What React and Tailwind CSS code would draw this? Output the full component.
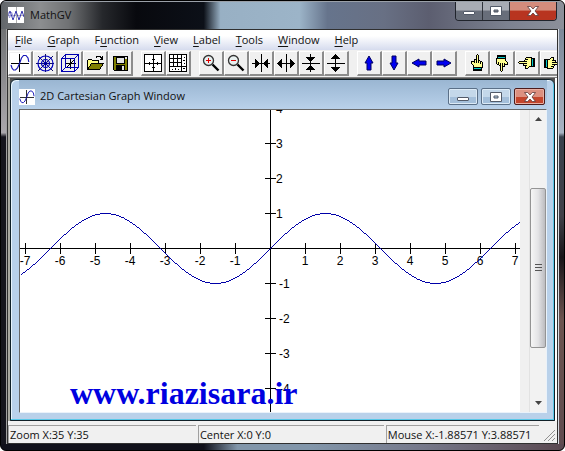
import { useId } from 'react';

const UNIT = 35;
const ORIGIN = { x: 250, y: 138 };

const wave = Array.from({ length: 501 }, (_, x) => {
  const y = ORIGIN.y - UNIT * Math.sin((x - ORIGIN.x) / UNIT);
  return `${x + 0.5},${Math.round(y) + 0.5}`;
}).join(' ');

const xTicks = [-7, -6, -5, -4, -3, -2, -1, 1, 2, 3, 4, 5, 6, 7];
const yTicks = [4, 3, 2, 1, -1, -2, -3, -4];

const Icon = ({ children, turn = 0 }) => (
  <svg viewBox="0 0 20 20" className="h-5 w-5" fill="none" stroke="#000" shapeRendering="crispEdges" aria-hidden="true">
    <g transform={`rotate(${turn} 10 10)`}>{children}</g>
  </svg>
);

const SineIcon = () => (
  <Icon>
    <rect width="20" height="20" fill="#fff" stroke="none" />
    <path d="M1 10.500h18M9.500 1v18" />
    <path
      d="M1 12l1 3 1.500 2h2L7.500 15l2-4.500L11.500 5l2-2.500h2.500L18 5l.8 4"
      stroke="#1818b8"
      strokeWidth="1.2"
      shapeRendering="auto"
    />
  </Icon>
);

const PolarIcon = () => (
  <Icon>
    <path d="M1 10.500h18M10.500 1v18M3 3l15 15M3 18L18 3" stroke="#101060" />
    <g stroke="#0000c0" strokeWidth="1.2" shapeRendering="auto">
      <circle cx="10.5" cy="10.5" r="7.5" />
      <circle cx="10.5" cy="10.5" r="4" />
      <circle cx="10.5" cy="10.5" r="1.5" fill="#000060" />
    </g>
  </Icon>
);

const CubeIcon = () => (
  <Icon>
    <path d="M5 10.500h11M10.500 5v11M6 15l9-9" />
    <path d="M1.500 5.500h13v13h-13zM5.500 1.500h13v13h-13zM1.500 5.500l4-4M14.500 5.500l4-4M14.500 18.500l4-4M1.500 18.500l4-4" stroke="#0000b0" />
  </Icon>
);

const OpenIcon = () => (
  <Icon>
    <path d="M2.500 16.500v-9l1-1h3l1 1h6v3" fill="#ffff80" />
    <path d="M2.500 16.500l4-6h12l-4 6z" fill="#808000" />
    <path d="M11 4.500l1-1h3l2 2M17.500 3v3M15 6.500h3" />
  </Icon>
);

const SaveIcon = () => (
  <Icon>
    <path d="M3.500 3.500h14v14h-13l-1-1z" fill="#808000" />
    <path d="M6.500 4h8v6h-8z" fill="#e4e4e4" />
    <path d="M6 12h9v5h-9z" fill="#000" stroke="none" />
    <path d="M12 13h2v4h-2zM15 4h2v2h-2z" fill="#e4e4e4" stroke="none" />
  </Icon>
);

const AxesIcon = () => (
  <Icon>
    <path d="M1.500 1.500h17v17h-17z" fill="#fff" />
    <path d="M2 10.500h17M10.500 2v17M6.500 9v3M14.500 9v3M9 6.500h3M9 14.500h3" />
  </Icon>
);

const GridIcon = () => (
  <Icon>
    <path d="M1.500 1.500h17v17h-17z" fill="#fff" />
    <path d="M2 5.500h12M2 9.500h12M2 13.500h17M5.500 2v12M9.500 2v12M13.500 2v17" />
    <path d="M16 4.500h1M15 7.500h2M16 10.500h1M4.500 16v1M7.500 15v2M10.500 16v1M15 15.500h2" />
  </Icon>
);

const ZoomIcon = ({ plus }) => (
  <Icon>
    <g shapeRendering="auto">
      <circle cx="7.5" cy="7.5" r="5" fill="#e8f0f0" stroke="#333" strokeWidth="1.3" />
      <path d="M11.500 11.500l6 6" strokeWidth="2.4" />
    </g>
    <path d={plus ? 'M5 7.500h5M7.500 5v5' : 'M5 7.500h5'} stroke="#e00000" />
  </Icon>
);

const ShrinkIcon = ({ turn }) => (
  <Icon turn={turn}>
    <path d="M10.500 1v18M1 10.500h18" />
    <path d="M4 6l5 4.500L4 15zM17 6l-5 4.500 5 4.500z" fill="#000" stroke="none" />
  </Icon>
);

const StretchIcon = ({ turn }) => (
  <Icon turn={turn}>
    <path d="M10.500 1v18M1 10.500h18" />
    <path d="M6 6l-5 4.500L6 15zM14 6l5 4.500-5 4.500z" fill="#000" stroke="none" />
  </Icon>
);

const ArrowIcon = ({ turn }) => (
  <Icon turn={turn}>
    <path d="M10 3l4 7h-2v7H8v-7H6z" fill="#0000f0" stroke="#000060" shapeRendering="auto" />
  </Icon>
);

const HandIcon = ({ turn }) => (
  <Icon turn={turn}>
    <path d="M6.500 14.500v-2l-2-2v-2h2l1 1v-3h2v-4l1-1 1 1v5h1l3 2v5l-1 1z" fill="#ffff90" />
    <path d="M9.500 7v3M11.500 7v3M13.500 8v3" />
    <path d="M6.500 14.500h8v3h-8z" fill="#000" />
    <path d="M7 15.500h7" stroke="#00c8c8" />
  </Icon>
);

const groups = [
  [
    ['2D Cartesian graph', <SineIcon />],
    ['2D polar graph', <PolarIcon />],
    ['3D graph', <CubeIcon />],
    ['Open', <OpenIcon />],
    ['Save', <SaveIcon />],
  ],
  [
    ['Axes', <AxesIcon />],
    ['Grid', <GridIcon />],
  ],
  [
    ['Zoom in', <ZoomIcon plus />],
    ['Zoom out', <ZoomIcon />],
    ['Shrink X', <ShrinkIcon />],
    ['Stretch X', <StretchIcon />],
    ['Shrink Y', <ShrinkIcon turn={90} />],
    ['Stretch Y', <StretchIcon turn={90} />],
  ],
  [
    ['Move up', <ArrowIcon />],
    ['Move down', <ArrowIcon turn={180} />],
    ['Move left', <ArrowIcon turn={-90} />],
    ['Move right', <ArrowIcon turn={90} />],
  ],
  [
    ['Rotate up', <HandIcon />],
    ['Rotate down', <HandIcon turn={180} />],
    ['Rotate left', <HandIcon turn={-90} />],
    ['Rotate right', <HandIcon turn={90} />],
  ],
];

const menus = [
  ['', 'F', 'ile'],
  ['', 'G', 'raph'],
  ['F', 'u', 'nction'],
  ['', 'V', 'iew'],
  ['', 'L', 'abel'],
  ['', 'T', 'ools'],
  ['', 'W', 'indow'],
  ['', 'H', 'elp'],
];

const MinimizeGlyph = () => (
  <svg viewBox="0 0 12 10" className="h-[10px] w-3" aria-hidden="true">
    <rect x="0.5" y="5.5" width="11" height="3" rx="0.5" fill="#fff" stroke="#525a68" />
  </svg>
);

const MaximizeGlyph = () => (
  <svg viewBox="0 0 12 10" className="h-[10px] w-3" aria-hidden="true">
    <path d="M0.500 0.500h11v9h-11zM4 4v2h4V4z" fill="#fff" fillRule="evenodd" stroke="#525a68" />
  </svg>
);

const CloseGlyph = () => (
  <svg viewBox="0 0 12 10" className="h-[10px] w-3" aria-hidden="true">
    <path d="M0.500 0.500h3.200L6 3l2.300-2.500h3.200L8 5l3.500 4.500H8.300L6 7 3.700 9.500H0.500L4 5z" fill="#fff" stroke="#5c3838" strokeWidth="0.8" />
  </svg>
);

const Graph = () => {
  const clip = useId();

  return (
    <svg
      viewBox="0 0 500 302"
      preserveAspectRatio="xMidYMid slice"
      className="h-full w-full min-w-0 flex-1 bg-white font-['Liberation_Sans',sans-serif] text-[12px]"
      role="img"
      aria-label="Graph of sin(x)"
    >
      <clipPath id={clip}>
        <rect width="500" height="302" />
      </clipPath>
      <g clipPath={`url(#${clip})`}>
        <g stroke="#000" shapeRendering="crispEdges">
          <path d="M0 138.500H500M250.500 0V302" />
          {xTicks.map((n) => (
            <path key={n} d={`M${ORIGIN.x + n * UNIT + 0.5} 133v11`} />
          ))}
          {yTicks.map((n) => (
            <path key={n} d={`M245 ${ORIGIN.y - n * UNIT + 0.5}h11`} />
          ))}
        </g>
        {xTicks.map((n) => (
          <text key={n} x={ORIGIN.x + n * UNIT} y="155" textAnchor="middle">{n}</text>
        ))}
        {yTicks.map((n) => (
          <text key={n} x={n > 0 ? 256 : 259} y={ORIGIN.y - n * UNIT + 5}>{n}</text>
        ))}
        <polyline points={wave} fill="none" stroke="#0000a8" shapeRendering="crispEdges" />
        <text x="50" y="294" fill="#0000e0" className="font-['Liberation_Serif',serif] text-[32px] font-bold">
          www.riazisara.ir
        </text>
      </g>
    </svg>
  );
};

const ScrollBar = () => (
  <div className="flex w-[17px] flex-col border-l border-[#e2e2e2] bg-[#f2f2f2]">
    <button aria-label="Scroll up" className="flex h-[18px] items-center justify-center">
      <svg viewBox="0 0 7 4" className="h-1 w-[7px]"><path d="M0 4l3.500-4L7 4z" fill="#444" /></svg>
    </button>
    <div className="flex flex-1 flex-col">
      <div className="flex-[60]" />
      <div className="flex flex-[160] flex-col items-center justify-center gap-px rounded-xs border border-[#949494] bg-linear-to-r from-[#f6f6f6] via-[#e4e4e6] to-[#bcbcc0]">
        <span className="h-px w-[7px] bg-[#555]" />
        <span className="mt-px h-px w-[7px] bg-[#555]" />
        <span className="mt-px h-px w-[7px] bg-[#555]" />
      </div>
      <div className="flex-[46]" />
    </div>
    <button aria-label="Scroll down" className="flex h-[18px] items-center justify-center">
      <svg viewBox="0 0 7 4" className="h-1 w-[7px]"><path d="M0 0l3.500 4L7 0z" fill="#444" /></svg>
    </button>
  </div>
);

const ChildWindow = () => (
  <section className="flex min-h-0 flex-1 flex-col rounded-t-md border border-[#102028] bg-[#b9d1ea] pr-[7px] pb-[7px] pl-2 shadow-[inset_-1px_-1px_0_#58c8e8,inset_1px_1px_0_#e8f4fc]">
    <header className="flex h-[29px] shrink-0 items-center bg-linear-to-b from-[#9ab6d2] to-[#b9d1ea] pt-1">
      <span className="flex h-4 w-4 items-center [&>svg]:h-4 [&>svg]:w-4"><SineIcon /></span>
      <h2 className="flex-1 pl-[5px]">2D Cartesian Graph Window</h2>
      <div className="flex gap-[3px] pr-[2px]">
        <button aria-label="Minimize graph" className="flex h-[17px] w-[30px] items-center justify-center rounded-xs border border-[#5b7088] bg-linear-to-b from-[#c4d8ea] from-50% to-[#a4bfda] to-50% shadow-[inset_0_0_0_1px_#dceaf6]">
          <MinimizeGlyph />
        </button>
        <button aria-label="Maximize graph" className="flex h-[17px] w-[30px] items-center justify-center rounded-xs border border-[#5b7088] bg-linear-to-b from-[#c4d8ea] from-50% to-[#a4bfda] to-50% shadow-[inset_0_0_0_1px_#dceaf6]">
          <MaximizeGlyph />
        </button>
        <button aria-label="Close graph" className="flex h-[17px] w-[31px] items-center justify-center rounded-xs border border-[#4c1c1c] bg-linear-to-b from-[#dc9080] from-50% to-[#c4452c] to-50% shadow-[inset_0_0_0_1px_#e8b0a4]">
          <CloseGlyph />
        </button>
      </div>
    </header>
    <div className="flex min-h-0 flex-1 border border-t-[#686868] border-r-[#eaf2fa] border-b-[#eaf2fa] border-l-[#686868] bg-[#f0f0f0]">
      <Graph />
      <div className="w-[9px] bg-[#f0f0f0]" />
      <ScrollBar />
    </div>
  </section>
);

const App = () => {
  return (
    <div className="flex h-screen min-h-[300px] flex-col overflow-hidden rounded-md border border-black bg-[#4c4650] bg-[linear-gradient(90deg,#10101a,#10101a_36%,#8296aa_42%,#8296aa_55%,#76788a_75%,#5a4850)] font-['Open_Sans','Noto_Sans',sans-serif] text-[11px] text-[#111]">
      {/* title bar */}
      <header className="flex h-7 shrink-0 items-start border-t border-[#9aa0a8] bg-[linear-gradient(90deg,#62666a,#8c8e90_7%,#707274_12%,#26282c_18%,#08090e_24%,#0c1018_36%,#98b0c4_39%,#9cb4c8_53%,#66748c_58%,#687084_68%,#5c5e70_76%,#7c8290_90%,#8c909a)] pr-[7px] pl-[7px]">
        <span className="mt-[5px] flex h-4 w-4 bg-white">
          <svg viewBox="0 0 16 16" fill="none" aria-hidden="true">
            <path d="M0 8.500h16M8.500 0v16" stroke="#b0b0b0" />
            <path d="M0 9l2-5 3 9 3-9 3 9 3-9 2 6" stroke="#3838b0" />
            <path d="M0 5l1.500 6 2-6 2 6" stroke="#9898d8" />
          </svg>
        </span>
        <h1 className="flex-1 pt-[5px] pl-[6px]">MathGV</h1>
        <div className="flex h-[19px] overflow-hidden rounded-b border border-t-0 border-[#20242c]">
          <button aria-label="Minimize" className="flex w-[27px] items-center justify-center border-r border-[#30343c] bg-linear-to-b from-[#a8acb4] from-45% to-[#686e7a] to-50%"><MinimizeGlyph /></button>
          <button aria-label="Maximize" className="flex w-[27px] items-center justify-center border-r border-[#30343c] bg-linear-to-b from-[#a8acb4] from-45% to-[#686e7a] to-50%"><MaximizeGlyph /></button>
          <button aria-label="Close" className="flex w-[46px] items-center justify-center bg-linear-to-b from-[#d48c7c] from-45% to-[#b83420] to-50%"><CloseGlyph /></button>
        </div>
      </header>

      <div className="flex min-h-0 flex-1">
        <div className="w-[6px] shrink-0 border-r border-[#a0a0a0] bg-[linear-gradient(180deg,#707274,#aaa8ac_25%,#14141c_26%,#14141c)]" />
        <main className="flex min-w-0 flex-1 flex-col border border-[#303030] bg-[#f0f0f0]">
          <nav className="flex h-[20px] shrink-0 items-center gap-[15px] bg-linear-to-b from-white from-30% to-[#d6dcee] pl-[7px]">
            {menus.map(([before, key, after]) => (
              <button key={key} className="leading-4">
                {before}<span className="underline underline-offset-2">{key}</span>{after}
              </button>
            ))}
          </nav>
          <div className="flex h-[28px] shrink-0 items-center gap-2 overflow-hidden border-b border-[#808080]" role="toolbar" aria-label="Graph tools">
            {groups.map((group, i) => (
              <div key={i} className="flex shrink-0">
                {group.map(([label, icon]) => (
                  <button key={label} aria-label={label} className="flex h-[25px] w-[25px] items-center justify-center border-t border-r-2 border-b-2 border-l border-t-white border-r-[#8c8c8c] border-b-[#8c8c8c] border-l-white bg-[#f0f0f0]">
                    {icon}
                  </button>
                ))}
              </div>
            ))}
          </div>
          <div className="flex min-h-0 flex-1 flex-col border-r-2 border-l-2 border-r-white border-l-[#a8a8a0] bg-[#505050] pt-px">
            <ChildWindow />
          </div>
          <footer className="flex h-[22px] shrink-0 items-end bg-[#f0f0f0] leading-[17px] whitespace-nowrap">
            <div className="flex-[187] border-t border-l border-[#a0a0a0] pl-px">Zoom X:35 Y:35</div>
            <div className="ml-[2px] flex-[185] border-t border-l border-[#a0a0a0] pl-px">Center X:0 Y:0</div>
            <div className="ml-[2px] flex-[152] border-t border-l border-[#a0a0a0] pl-px">Mouse X:-1.88571 Y:3.88571</div>
            <svg viewBox="0 0 18 16" className="h-4 w-[18px]" stroke="#909090" aria-hidden="true">
              <path d="M5 14L16 3M9 14l7-7M13 14l3-3" />
            </svg>
          </footer>
        </main>
        <div className="w-[6px] shrink-0 border-l border-[#d8dce4] bg-[linear-gradient(180deg,#7c8898,#a8b4c4_25%,#38404c_26%,#404048_45%,#181418_55%,#6c5450_70%,#604c50)]" />
      </div>
      <div className="h-[6px] shrink-0" />
    </div>
  );
};

export default App;
